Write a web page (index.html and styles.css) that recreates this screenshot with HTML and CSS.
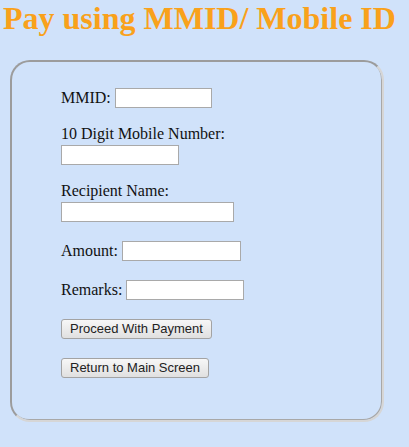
FILE: index.html
```html
<!DOCTYPE html>
<html>
<head>
<meta charset="utf-8">
<link rel="stylesheet" href="styles.css">
</head>
<body>
<h1 class="title">Pay using MMID/ Mobile ID</h1>
<div class="panel">
  <div class="form">
    <div class="row"><span class="lbl">MMID:</span><input class="inp w97" type="text"></div>
    <div class="stack"><span class="lbl">10 Digit Mobile Number:</span><div class="row"><input class="inp w118" type="text"></div></div>
    <div class="stack"><span class="lbl">Recipient Name:</span><div class="row"><input class="inp w173" type="text"></div></div>
    <div class="row"><span class="lbl">Amount:</span><input class="inp w119" type="text"></div>
    <div class="row"><span class="lbl">Remarks:</span><input class="inp w118" type="text"></div>
    <div class="row"><button class="btn" type="button">Proceed With Payment</button></div>
    <div class="row"><button class="btn" type="button">Return to Main Screen</button></div>
  </div>
</div>
</body>
</html>
```
FILE: styles.css
```css
html, body {
  margin: 0;
  padding: 0;
  background: #d0e2fa;
}
body {
  font-family: "Liberation Serif", "Times New Roman", serif;
  font-size: 16px;
  color: #111;
}
.title {
  margin: 0;
  padding-left: 3px;
  font-family: "Liberation Serif", "Times New Roman", serif;
  font-size: 32px;
  font-weight: bold;
  line-height: 37px;
  color: #f9a11b;
  white-space: nowrap;
}
.panel {
  box-sizing: border-box;
  margin: 23px 0 0 10px;
  width: 374px;
  height: 362px;
  border: 2px solid;
  border-color: #9c9c9c #d6d6d6 #d6d6d6 #9c9c9c;
  border-radius: 20px;
  box-shadow: inset -1px -1px 0 #a8a8a8;
  padding: 24px 0 0 49px;
}
.form {
  display: flex;
  flex-direction: column;
  gap: 16px;
}
.row {
  display: flex;
  align-items: center;
  height: 23px;
  gap: 4px;
}
.stack {
  display: flex;
  flex-direction: column;
}
.lbl {
  line-height: 18px;
  height: 18px;
}
.inp {
  box-sizing: border-box;
  height: 20px;
  margin: 0;
  border: 1px solid #a9a9a9;
  background: #fff;
  padding: 0 2px;
  font-size: 13px;
}
.w97 { width: 97px; }
.w118 { width: 118px; }
.w119 { width: 119px; }
.w173 { width: 173px; }
.btn {
  box-sizing: border-box;
  height: 20px;
  margin: 0;
  padding: 0 8px;
  border: 1px solid #a3a3a3;
  border-radius: 3px;
  background: linear-gradient(#f7f7f7, #e0e0e0);
  font-family: "Liberation Sans", Arial, sans-serif;
  font-size: 13px;
  color: #222;
  line-height: 18px;
}
```
